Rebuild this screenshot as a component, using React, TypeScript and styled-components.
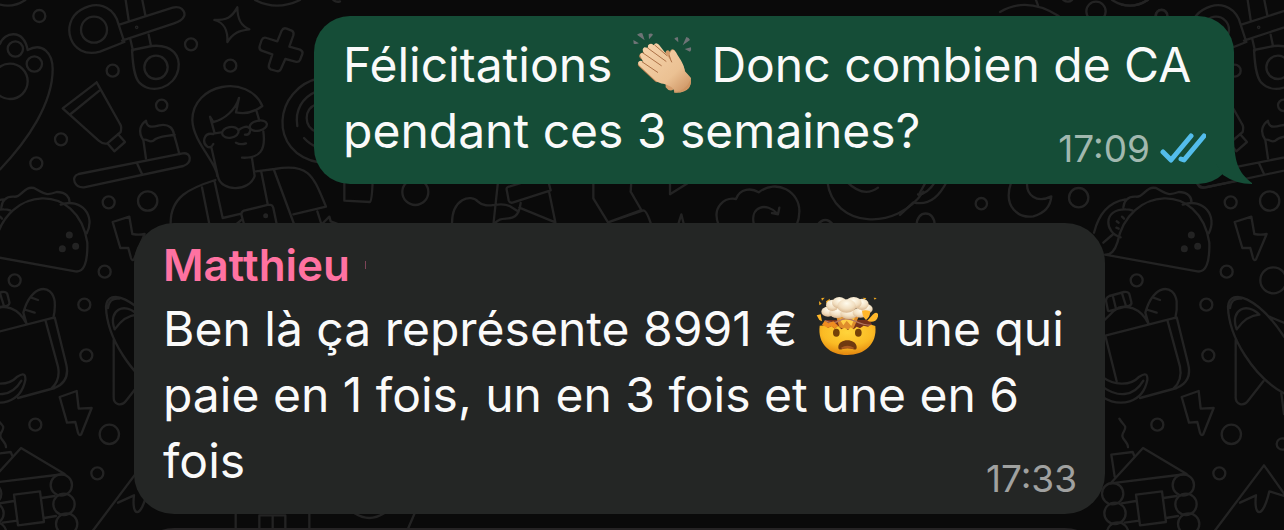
import React from 'react';
import styled, { createGlobalStyle } from 'styled-components';

const GlobalStyle = createGlobalStyle`
  * { box-sizing: border-box; }
  body {
    margin: 0;
    background: #0a0a0a;
    font-family: Inter, "Liberation Sans", sans-serif;
    overflow: hidden;
  }
`;

const Screen = styled.main`
  position: relative;
  height: 100vh;
  overflow: hidden;
`;

const Wallpaper = styled.svg`
  position: absolute;
  top: 0;
  left: 0;
  fill: none;
  stroke: #232323;
  stroke-width: 7;
  stroke-linecap: round;
  stroke-linejoin: round;
`;

const Thread = styled.div`
  position: relative;
  display: flex;
  flex-direction: column;
  padding: 16px 50px 0 134px;
`;

const Bubble = styled.article<{ $mine?: boolean }>`
  position: relative;
  display: grid;
  flex-shrink: 0;
  width: 100%;
  max-width: ${(p) => (p.$mine ? 920 : 971)}px;
  align-self: ${(p) => (p.$mine ? 'flex-end' : 'flex-start')};
  margin-bottom: ${(p) => (p.$mine ? 39 : 14)}px;
  padding: 16px 28px 20px 29px;
  border-radius: ${(p) => (p.$mine ? 36 : 40)}px;
  background: ${(p) => (p.$mine ? '#154d37' : '#242625')};
`;

const NextBubble = styled.div`
  width: 100%;
  max-width: 971px;
  height: 80px;
  border-radius: 40px;
  background: #252324;
`;

const Sender = styled.h2`
  margin: 0 0 5px;
  font-size: 44px;
  line-height: 52px;
  font-weight: 600;
  color: #ff72a1;

  &::after {
    content: '';
    display: inline-block;
    width: 1px;
    height: 8px;
    margin-left: 15px;
    vertical-align: 12px;
    background: #7d4458;
  }
`;

const Content = styled.div`
  display: grid;
`;

const Message = styled.p`
  grid-area: 1 / 1;
  margin: 0;
  font-size: 48px;
  line-height: 66px;
  color: #fafafa;
`;

const Meta = styled.div<{ $mine?: boolean }>`
  grid-area: 1 / 1;
  align-self: end;
  justify-self: end;
  display: flex;
  align-items: center;
  gap: 10px;
  margin-bottom: -7px;
  font-size: 37px;
  line-height: 44px;
  color: ${(p) => (p.$mine ? '#a1b8af' : '#a0a1a0')};
`;

const Emoji = styled.svg`
  width: 62px;
  height: 62px;
  margin: 0 5px;
  vertical-align: -12px;
`;

const Tail = styled.svg`
  position: absolute;
  right: -18px;
  bottom: 0;
`;

type Dot = [number, number, number];
const Dots = ({ items }: { items: Dot[] }) => (
  <>
    {items.map(([x, y, r]) => (
      <circle key={`${x}-${y}`} cx={x} cy={y} r={r} />
    ))}
  </>
);

const THIRD = 'scale(0.333333)';

const Doodles = () => (
  <Wallpaper width="100%" height="100%" aria-hidden="true">
    <defs>
      <g id="tile">
        <g transform={THIRD}>
          <Dots
            items={[
              [118, 48, 18], [338, 212, 18], [573, 133, 18], [691, 197, 18], [485, 316, 17],
              [183, 418, 18], [109, 490, 18], [46, 147, 23], [103, 192, 23], [30, 244, 53],
              [282, 89, 39], [468, 202, 35],
            ]}
          />
          <circle cx="410" cy="82" r="2" />
          <path d="M0 14Q40 24 76 0M765 0Q830 34 900 0M1000 0Q1010 8 1020 4" />
          <path d="M0 132C12 96 70 84 83 150C128 126 158 160 158 208C158 310 84 420 0 508" />
          <path d="M373 126L300 155C208 180 178 68 242 30C292 0 332 20 350 56L373 126M358 74L518 23C548 14 568 46 540 62Q535 66 520 71L366 122M377 0L386 60M427 0L436 46M391 118L399 152M446 104L453 138" />
          <path d="M396 150L455 138C520 132 542 170 535 208C524 262 456 286 418 248C400 228 398 180 396 150Z" />
          <path d="M290 247L188 325L296 422Q310 434 322 430L362 396Q366 380 360 372L290 247M298 272L212 342M324 432L343 454L375 426L354 402" />
          <path d="M438 476L430 420C412 396 422 372 438 362C440 384 456 382 478 376C510 370 520 388 522 404Q530 430 538 462M430 420C442 414 446 430 460 422C476 406 500 410 524 404" />
          <path d="M236 522L548 460C574 456 578 488 550 498L252 562C224 564 210 530 236 522ZM412 492L426 522" />
          <path d="M712 22C712 60 724 78 748 88C716 92 700 98 682 126C684 88 672 68 643 60C680 60 694 54 712 22Z" />
          <path d="M845 92Q850 82 860 86L875 92Q883 96 880 106L868 140L900 149Q910 154 907 162L900 180Q896 188 886 185L856 177L843 206Q838 216 829 213L812 208Q804 204 807 194L817 163L785 152Q776 147 779 138L785 120Q790 110 800 114L832 124Z" />
          <path d="M652 528C652 490 578 424 577 360C578 250 744 220 787 318Q750 346 708 337L717 294C706 330 674 358 640 366L630 350L644 400L664 397M640 402C610 396 606 428 622 440Q632 446 640 432M634 442L654 530C664 576 748 576 764 528L756 475M770 335L778 362M790 394C798 450 780 476 726 473M708 428Q722 436 738 430M735 404Q748 406 750 394Q754 384 740 380Q730 380 716 390" />
          <ellipse cx="691" cy="397" rx="25" ry="16" transform="rotate(-10 691 397)" />
          <ellipse cx="775" cy="377" rx="26" ry="15" transform="rotate(-12 775 377)" />
          <path d="M646 540C570 564 510 590 512 672M606 562L628 672M644 545L668 654L724 641M768 514L824 507C930 488 940 530 978 620L880 643M784 516L803 612M822 510L882 672M952 634L964 672M732 672L724 644Q724 634 732 632L806 614Q818 614 820 624L830 672M710 672L726 658M966 672L988 650L992 664L1014 672" />
          <circle cx="797" cy="647" r="4" />
          <path d="M960 234C820 264 800 460 960 488M950 274C906 292 884 332 892 378M912 414Q930 434 950 440M950 312C910 328 910 380 950 396" />
        </g>
        <g transform={`translate(-42 170) ${THIRD}`}>
          <Dots
            items={[
              [452, 97, 18], [569, 93, 29], [440, 305, 18], [580, 331, 39],
              [170, 331, 18], [379, 404, 18], [385, 556, 18], [232, 764, 18], [454, 793, 29],
              [418, 910, 18], [607, 822, 17], [310, 945, 32], [318, 1003, 32], [326, 1062, 32],
              [98, 971, 32], [105, 1030, 32], [113, 1089, 32],
            ]}
          />
          <g fill="#232323">
            <Dots items={[[334, 195, 7], [313, 236, 7], [353, 229, 7]]} />
          </g>
          <path d="M75 254Q100 256 112 218C146 48 360 34 388 218Q390 310 352 304Z" />
          <path d="M42 188Q64 100 136 88M130 112Q134 78 168 80C190 84 196 48 228 54C260 72 264 78 296 66C326 66 336 84 334 98M308 104C370 82 414 138 386 190M122 202C74 190 66 116 138 118Q148 118 158 122M70 218L100 192M110 154L116 158M126 140L132 146M109 173L116 176" />
          <path d="M76 497L290 442L324 580Q338 634 290 654L180 684M76 497L110 634M262 450L300 590Q308 630 280 656M206 462C180 408 136 408 118 412C88 428 90 442 60 460M206 462L196 428C220 340 282 340 290 394Q292 420 286 444M218 382L240 390M204 420L230 428M84 422L78 392Q78 382 88 378L132 366Q144 364 148 372L154 396Q156 404 148 407L92 422Q86 424 84 422ZM98 376L108 416M126 370L138 408" />
          <path d="M66 620C100 646 150 650 178 620Q204 602 202 630C188 700 120 714 66 680M70 652C110 680 160 684 190 632" />
          <path d="M464 156L514 140L523 192Q542 196 560 192L528 268Q522 274 519 264L511 234L487 234ZM305 681L356 663L362 716L401 714L370 792Q364 800 360 788L352 756L327 758Z" />
          <path d="M612 670C520 620 446 500 444 410C450 350 536 384 612 500M450 414Q454 382 484 386M470 478C448 420 500 394 538 434Q500 436 470 478ZM568 440L640 470M467 510V680C466 704 490 712 506 690L550 634M604 670L612 732" />
          <path d="M118 746C130 768 142 764 132 784C116 806 144 812 144 832M92 940L189 834L320 912ZM104 920L94 854L158 846L164 860M168 974L246 964L258 1056L180 1066ZM124 1000L168 993M250 984L290 978M134 1058L178 1052M258 1044L294 1038" />
          <path d="M400 1088L552 886L640 1010M480 998L528 976C520 1040 548 1050 568 964L612 978" />
        </g>
      </g>
    </defs>
    <use href="#tile" />
    <use href="#tile" x="1122" />
    <g transform={`translate(430 175) ${THIRD}`}>
      <path d="M66 150C64 70 124 56 144 80C170 106 210 76 240 94L266 110M204 20L190 150M230 44Q228 36 240 34L350 0L362 46L250 82Q240 86 236 76ZM358 54L376 142L268 98M272 84C262 160 214 110 194 148M490 20V70L534 142L634 105L602 50L604 20M534 142L640 106Q650 106 664 150M720 20V58L780 20M744 150L754 118L762 150" />
      <path d="M866 150C844 96 884 66 918 72C930 40 964 38 986 52C1040 10 1110 50 1108 110Q1108 130 1100 150M972 150C958 94 1010 80 1042 116M1048 98L1044 118L1026 114M1192 20C1210 160 1400 170 1480 50M1250 20Q1300 70 1344 38M1162 150Q1186 120 1210 150" />
    </g>
    <g transform={`translate(240 150) ${THIRD}`}>
      <path d="M313 90V152L390 156Q396 156 398 90" />
      <circle cx="526" cy="126" r="39" />
    </g>
    <g transform={`translate(900 175) ${THIRD}`}>
      <path d="M0 120L40 82C90 94 120 60 140 20M56 60L78 20M54 58Q80 60 106 20M334 20C306 100 360 130 400 124Q450 110 454 64C410 86 376 60 382 20M50 150C50 104 104 104 104 150M892 26Q900 44 920 36L1020 16" />
      <circle cx="244" cy="86" r="17" />
      <circle cx="536" cy="68" r="29" />
    </g>
    <g transform={`translate(1000 0) ${THIRD}`}>
      <path d="M0 36Q80 -12 176 48M108 0L114 16M336 0Q390 34 444 0M190 0Q204 10 216 0" />
      <circle cx="288" cy="34" r="29" />
      <circle cx="485" cy="46" r="17" />
    </g>
    <g transform={`translate(120 490) ${THIRD}`}>
      <path d="M347 60V120M418 120V76H496V120M458 76V120M568 60V120M704 70Q748 98 792 70M884 70L864 116" />
    </g>
  </Wallpaper>
);

const ClapEmoji = () => (
  <Emoji viewBox="30 36 186 186" role="img" aria-label="applaudissements">
    <defs>
      <linearGradient id="skin" x1="0" y1="0" x2="1" y2="1">
        <stop offset="0" stopColor="#f6d5ae" />
        <stop offset="0.65" stopColor="#ebc193" />
        <stop offset="1" stopColor="#c98d5c" />
      </linearGradient>
    </defs>
    <g fill="#6e7376">
      <path d="M48 44Q58 36 64 40L71 61ZM83 42Q92 38 96 44L84 58ZM37 60L54 70Q44 74 38 71ZM160 56Q164 50 171 52L172 67ZM185 76L196 51Q204 52 207 60ZM191 87L210 82Q212 92 207 95Z" />
    </g>
    <path d="M132 104C134 88 142 88 147 96C150 84 160 86 164 98C168 118 190 128 192 158C212 172 214 184 204 204Q190 220 160 218L158 208Q146 218 134 202Z" fill="#d39c6b" />
    <g fill="none" stroke="#c08555" strokeWidth="18" strokeLinecap="round">
      <path d="M60 133L108 177M64 108L118 158M75 93L130 142M90 81L142 128" />
    </g>
    <path d="M98 76Q104 64 114 74L140 108L152 126Q142 104 150 94Q158 84 166 98C172 112 188 126 192 154L210 174Q210 206 180 216Q166 220 152 202C132 188 120 194 104 182L54 136Q48 126 56 123Q62 120 68 128L60 112Q54 102 62 99L70 100Q60 88 70 82L82 84Q78 74 88 72Q92 70 98 76Z" fill="url(#skin)" />
    <g fill="none" stroke="#ad7247" strokeWidth="3" strokeLinecap="round">
      <path d="M64 126L110 157M66 99L121 137M80 84L135 124M101 75L138 107M145 107Q148 118 152 126" />
    </g>
    <path d="M158 218Q192 216 210 178Q214 216 158 218Z" fill="#cf9562" />
  </Emoji>
);

const MindBlownEmoji = () => (
  <Emoji viewBox="38 32 186 186" role="img" aria-label="tête qui explose">
    <defs>
      <radialGradient id="face" cx="0.5" cy="0.25" r="0.8">
        <stop offset="0" stopColor="#ffd43b" />
        <stop offset="0.55" stopColor="#fbbb24" />
        <stop offset="1" stopColor="#df7d0b" />
      </radialGradient>
      <radialGradient id="cloud" cx="0.5" cy="0.3" r="0.7">
        <stop offset="0" stopColor="#fffbed" />
        <stop offset="0.6" stopColor="#f2dfc1" />
        <stop offset="1" stopColor="#d9b78f" />
      </radialGradient>
    </defs>
    <path d="M54 38L64 37L56 46ZM68 48L80 40L78 50L70 56ZM47 47L55 55L48 60ZM178 37L189 38L184 44ZM211 37L220 38L214 43Z" fill="#f4ab20" />
    <path d="M58 122L70 104L200 104L208 124L150 138L90 134Z" fill="#78331b" />
    <path d="M98 92L108 126L124 132L150 130L166 94Z" fill="#df8c2c" />
    <path d="M108 100L120 120L130 106L144 122L154 98Z" fill="#ffce48" />
    <path d="M64 106Q90 118 108 106T154 107T204 120" fill="none" stroke="#b57a60" strokeWidth="4" />
    <path d="M49 121L66 120L74 128L84 122L94 130L104 121L114 132L124 127L134 134L142 126L151 132L160 124L170 129L181 121L194 124L204 118L216 122C222 176 184 209 132 209C80 209 42 176 49 121Z" fill="url(#face)" />
    <path d="M56 118L64 106L76 114L90 108L104 121L94 130L84 122L74 128Z" fill="#ef8c20" />
    <g fill="url(#cloud)">
      <ellipse cx="74" cy="79" rx="20" ry="15" />
      <ellipse cx="102" cy="82" rx="24" ry="16" />
      <ellipse cx="137" cy="85" rx="26" ry="16" />
      <ellipse cx="172" cy="82" rx="24" ry="15" />
      <ellipse cx="191" cy="71" rx="17" ry="14" />
      <ellipse cx="87" cy="60" rx="19" ry="17" />
      <ellipse cx="176" cy="57" rx="20" ry="17" />
      <ellipse cx="108" cy="52" rx="22" ry="17" />
      <ellipse cx="151" cy="53" rx="24" ry="18" />
      <ellipse cx="130" cy="62" rx="28" ry="20" />
    </g>
    <path d="M176 77Q186 72 200 78Q202 92 188 104Q178 96 176 77ZM192 106L208 88Q218 78 224 86Q226 98 216 106Q204 112 192 106ZM40 90L52 87L56 108L48 104Z" fill="#ffb72a" />
    <ellipse cx="99" cy="142" rx="10" ry="12" fill="#754108" />
    <ellipse cx="165" cy="142" rx="10" ry="12" fill="#754108" />
    <path d="M105 184C106 158 158 158 160 184Q161 195 150 192Q132 186 116 192Q104 195 105 184Z" fill="#703a10" />
    <path d="M113 187Q132 176 152 187L150 191Q132 186 116 191Z" fill="#a95a22" />
  </Emoji>
);

const ReadTicks = () => (
  <svg width="46" height="32" viewBox="0 0 46 32" fill="none" stroke="#53bdeb" strokeWidth="5" strokeLinecap="round" strokeLinejoin="round" role="img" aria-label="Lu">
    <path d="M3 19L11 27L31 3M21 26L24 27L44 3" />
  </svg>
);

export default function App() {
  return (
    <>
      <GlobalStyle />
      <Screen>
        <Doodles />
        <Thread>
          <Bubble $mine>
            <Content>
              <Message>
                Félicitations <ClapEmoji /> Donc combien de CA pendant ces 3 semaines?
              </Message>
              <Meta $mine>
                <time>17:09</time>
                <ReadTicks />
              </Meta>
            </Content>
            <Tail width="44" height="50" viewBox="0 0 44 50" aria-hidden="true">
              <path d="M26 0C26 28 30 38 44 49V50Q28 50 15 41L8 30V0Z" fill="#154d37" />
            </Tail>
          </Bubble>
          <Bubble>
            <Sender>Matthieu</Sender>
            <Content>
              <Message>
                Ben là ça représente 8991 € <MindBlownEmoji /> une qui paie en 1 fois, un en 3 fois et une en 6 fois
              </Message>
              <Meta>
                <time>17:33</time>
              </Meta>
            </Content>
          </Bubble>
          <NextBubble />
        </Thread>
      </Screen>
    </>
  );
}
